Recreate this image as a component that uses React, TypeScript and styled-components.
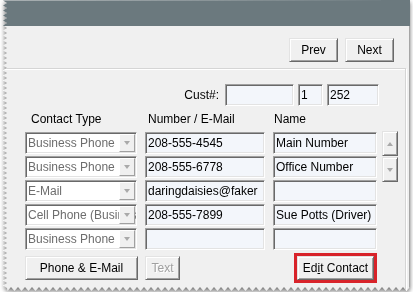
import styled, { createGlobalStyle } from 'styled-components'

const GlobalStyle = createGlobalStyle`
  html, body {
    margin: 0;
    padding: 0;
    background: #fff;
  }
  body {
    font-family: "Liberation Sans", Arial, sans-serif;
    font-size: 12px;
    color: #000;
  }
`

const W = 410
const H = 292

// torn paper edge on the left and bottom of the screenshot
const tornEdge = () => {
  const pts: string[] = [`${W}px 0`, `${W}px ${H - 4}px`]
  for (let x = W, i = 0; x >= 6; x -= 3.5, i++) pts.push(`${x}px ${H - (i % 2 ? 1 : 5)}px`)
  for (let y = H - 4, i = 0; y >= 0; y -= 2.5, i++) pts.push(`${i % 2 ? 3 : 7}px ${y}px`)
  return `polygon(${pts.join(', ')})`
}

const Shadow = styled.div`
  width: ${W}px;
  filter: drop-shadow(0 2px 2px rgba(0, 0, 0, 0.55));
`

const Window = styled.div`
  width: ${W}px;
  height: ${H}px;
  display: flex;
  flex-direction: column;
  overflow: hidden;
  background: #f0f0f0;
  clip-path: ${tornEdge()};
`

const TitleBar = styled.div`
  height: 26px;
  flex: none;
  background: #6b797e;
`

const Body = styled.div`
  flex: 1;
  display: flex;
  flex-direction: column;
  border-right: 1px solid #a5a5a5;
`

const NavRow = styled.div`
  display: flex;
  justify-content: flex-end;
  gap: 7px;
  padding: 12px 15px 0 0;
`

const Button = styled.button<{ $w: number; $disabled?: boolean }>`
  width: ${(p) => p.$w}px;
  height: 24px;
  padding: 0 0 1px;
  font-family: inherit;
  font-size: 12px;
  color: ${(p) => (p.$disabled ? '#a0a0a0' : '#000')};
  text-shadow: ${(p) => (p.$disabled ? '1px 1px 0 #fff' : 'none')};
  background: #f0f0f0;
  border: 1px solid;
  border-color: #e3e3e3 #696969 #696969 #e3e3e3;
  box-shadow: inset 1px 1px 0 #fff, inset -1px -1px 0 #a0a0a0;
  cursor: default;
`

const Underline = styled.span`
  text-decoration: underline;
`

const GroupBox = styled.div`
  flex: 1;
  margin: 6px 3px 0 2px;
  padding: 15px 0 0 22px;
  border: 1px solid #d5d5d5;
  box-shadow: inset 1px 1px 0 #fff, 1px 1px 0 #fff;
`

const CustRow = styled.div`
  display: flex;
  align-items: center;
  gap: 4px;
  height: 22px;
`

const CustLabel = styled.label`
  width: 194px;
  margin-right: 2px;
  text-align: right;
`

const Field = styled.div<{ $w?: number; $combo?: boolean }>`
  box-sizing: border-box;
  width: ${(p) => (p.$w ? `${p.$w}px` : 'auto')};
  height: 22px;
  display: flex;
  align-items: center;
  position: relative;
  padding: 0 0 0 2px;
  overflow: hidden;
  white-space: nowrap;
  background: ${(p) => (p.$combo ? '#fff' : '#f3f6fb')};
  color: ${(p) => (p.$combo ? '#6d6d6d' : '#000')};
  border: 1px solid;
  border-color: #a0a0a0 #fff #fff #a0a0a0;
  box-shadow: inset 1px 1px 0 #696969, inset -1px -1px 0 #e3e3e3;
`

const HeaderRow = styled.div`
  display: grid;
  grid-template-columns: 112px 120px 104px;
  column-gap: 8px;
  align-items: center;
  height: 26px;
`

const HeaderLabel = styled.span<{ $indent: number }>`
  padding-left: ${(p) => p.$indent}px;
`

const Grid = styled.div`
  display: grid;
  grid-template-columns: 112px 120px 104px 16px;
  grid-auto-rows: 22px;
  column-gap: 8px;
  row-gap: 2px;
`

const ComboArrow = styled.span`
  position: absolute;
  top: 1px;
  right: 1px;
  bottom: 1px;
  width: 16px;
  display: flex;
  align-items: center;
  justify-content: center;
  background: #f0f0f0;
  border: 1px solid;
  border-color: #fff #a0a0a0 #a0a0a0 #fff;
  box-sizing: border-box;
`

const Tri = styled.span<{ $up?: boolean }>`
  width: 0;
  height: 0;
  border-left: 3.5px solid transparent;
  border-right: 3.5px solid transparent;
  ${(p) => (p.$up ? 'border-bottom' : 'border-top')}: 4px solid #a9a9a9;
`

const ScrollCol = styled.div`
  grid-column: 4;
  grid-row: 1 / span 5;
  margin: -1px 0 0 -3px;
  display: flex;
  flex-direction: column;
  gap: 1px;
`

const ScrollButton = styled.div`
  box-sizing: border-box;
  width: 16px;
  height: 25px;
  display: flex;
  align-items: center;
  justify-content: center;
  background: #f0f0f0;
  border: 1px solid;
  border-color: #e3e3e3 #696969 #696969 #e3e3e3;
  box-shadow: inset 1px 1px 0 #fff, inset -1px -1px 0 #a0a0a0;
`

const ButtonRow = styled.div`
  display: flex;
  align-items: center;
  gap: 7px;
  margin-top: 3px;
  padding-right: 28px;
`

const Highlight = styled.div`
  display: flex;
  margin-left: auto;
  border: 3px solid #d8232a;
`

type Row = { type: string; number: string; name: string }

const rows: Row[] = [
  { type: 'Business Phone', number: '208-555-4545', name: 'Main Number' },
  { type: 'Business Phone', number: '208-555-6778', name: 'Office Number' },
  { type: 'E-Mail', number: 'daringdaisies@faker', name: '' },
  { type: 'Cell Phone (Business)', number: '208-555-7899', name: 'Sue Potts (Driver)' },
  { type: 'Business Phone', number: '', name: '' },
]

export default function App() {
  return (
    <>
      <GlobalStyle />
      <Shadow>
        <Window>
          <TitleBar />
          <Body>
            <NavRow>
              <Button $w={49}>Prev</Button>
              <Button $w={49}>Next</Button>
            </NavRow>
            <GroupBox>
              <CustRow>
                <CustLabel>Cust#:</CustLabel>
                <Field $w={69} />
                <Field $w={25}>1</Field>
                <Field $w={52}>252</Field>
              </CustRow>
              <HeaderRow>
                <HeaderLabel $indent={6}>Contact Type</HeaderLabel>
                <HeaderLabel $indent={3}>Number / E-Mail</HeaderLabel>
                <HeaderLabel $indent={1}>Name</HeaderLabel>
              </HeaderRow>
              <Grid>
                {rows.map((r, i) => [
                  <Field key={`t${i}`} $combo>
                    {r.type}
                    <ComboArrow>
                      <Tri />
                    </ComboArrow>
                  </Field>,
                  <Field key={`n${i}`}>{r.number}</Field>,
                  <Field key={`m${i}`}>{r.name}</Field>,
                ])}
                <ScrollCol>
                  <ScrollButton>
                    <Tri $up />
                  </ScrollButton>
                  <ScrollButton>
                    <Tri />
                  </ScrollButton>
                </ScrollCol>
              </Grid>
              <ButtonRow>
                <Button $w={113}>Phone &amp; E-Mail</Button>
                <Button $w={35} $disabled>
                  Text
                </Button>
                <Highlight>
                  <Button $w={77}>
                    Ed<Underline>i</Underline>t Contact
                  </Button>
                </Highlight>
              </ButtonRow>
            </GroupBox>
          </Body>
        </Window>
      </Shadow>
    </>
  )
}
